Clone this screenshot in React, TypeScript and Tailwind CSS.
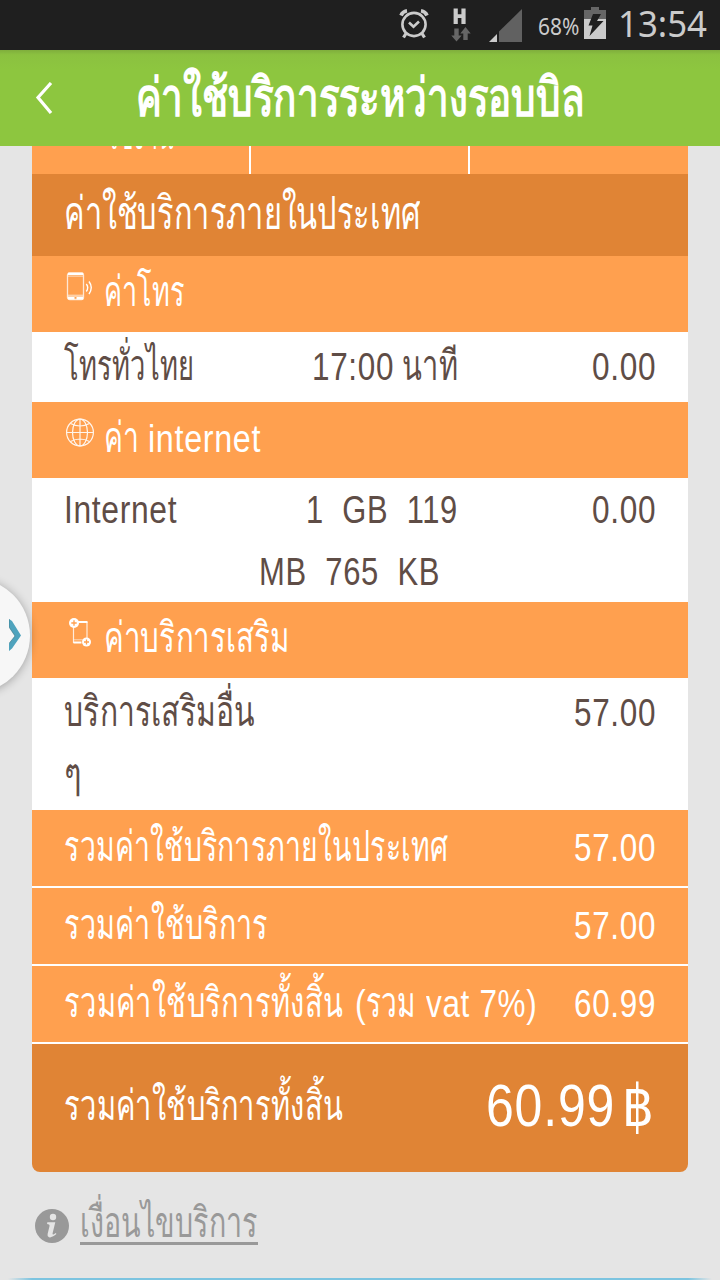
import { FC, ReactNode, useLayoutEffect, useRef, useState } from "react";

interface ITextProps {
  width: number;
  className?: string;
  children: ReactNode;
}

// condenses its text horizontally so that it takes the given width
const Text: FC<ITextProps> = ({ width, className = "", children }) => {
  const ref = useRef<HTMLSpanElement>(null);
  const [scale, setScale] = useState(1);

  useLayoutEffect(() => {
    if (ref.current) {
      setScale(width / ref.current.offsetWidth);
    }
  }, [width]);

  return (
    <span className={`block shrink-0 ${className}`} style={{ width }}>
      <span
        ref={ref}
        className="block w-max whitespace-pre origin-left"
        style={{ transform: `scaleX(${scale})` }}
      >
        {children}
      </span>
    </span>
  );
};

const Latin: FC<{ children: ReactNode }> = ({ children }) => (
  <span className="text-[38px] leading-none tracking-[0.8px]">{children}</span>
);

const AlarmIcon = () => (
  <svg className="mt-[9px]" width="30" height="30" viewBox="0 0 30 30" fill="none" stroke="#cbcbcb">
    <circle cx="15" cy="15.500" r="11.600" strokeWidth="2.600" />
    <path d="M10 13.500l4.500 4.200 5.500-5.200" strokeWidth="2.600" />
    <path d="M2 6.500Q3.500 2.500 8 1.800M28 6.500Q26.500 2.500 22 1.800" strokeWidth="3.600" />
    <path d="M7 24.500l-2.500 4M23 24.500l2.500 4" strokeWidth="3.200" />
  </svg>
);

const DataIcon = () => (
  <svg className="mt-2 ml-[22px]" width="20" height="34" viewBox="0 0 20 34">
    <path d="M2.600 .5h4.200v5.800h3.600V.5h4.200v15.500h-4.200V9.900H6.800V16H2.600z" fill="#cbcbcb" />
    <path
      d="M3.300 20.500h4.400v7h3l-5.200 6-5.200-6h3zM12.300 32v-6.500h-3L14.500 19l5.200 6.500h-3V32z"
      fill="#666"
    />
  </svg>
);

const SignalIcon = () => (
  <svg className="mt-[9px] ml-[18px]" width="33" height="33" viewBox="0 0 33 33">
    <path d="M10 33V22.500L33 0v33z" fill="#616161" />
    <path d="M0 33l8-8v8z" fill="#cbcbcb" />
  </svg>
);

const BatteryIcon = () => (
  <svg className="mt-[7px] ml-[5px]" width="22" height="32" viewBox="0 0 22 32">
    <path d="M7 0h8v3h7v9H0V3h7z" fill="#666" />
    <path d="M0 12h22v20H0z" fill="#cbcbcb" />
    <path d="M9 7h8l-4 7h6.500L5.500 29l3-10.500H4.500z" fill="#1f1f1f" />
  </svg>
);

const PhoneIcon = () => (
  <svg width="28" height="29" viewBox="0 0 28 29" fill="none" stroke="#fff">
    <rect x="1.500" y="1" width="16" height="26.500" rx="2" strokeWidth="1.300" opacity=".75" />
    <path d="M2 2h15M2 26.300h6.500M10.500 26.300h6.500" strokeWidth="2.400" />
    <path d="M2 23.800h15" strokeWidth="2.400" opacity=".5" />
    <path d="M2 4.500h15" strokeWidth="1" opacity=".4" />
    <path d="M20.300 12q2.800 3.500 0 7.500M23 9.500q4.500 6 0 12.500" strokeWidth="1.400" />
  </svg>
);

const GlobeIcon = () => (
  <svg width="29" height="29" viewBox="0 0 29 29" fill="none" stroke="#fff" strokeWidth="1.200" opacity=".9">
    <circle cx="14" cy="14.500" r="13.400" />
    <ellipse cx="14" cy="14.500" rx="7.500" ry="13.400" />
    <path d="M14 1v27M.5 14.500h27M4.500 5.500q9.500 5 19 0M4.500 23.500q9.500-5 19 0" />
  </svg>
);

const ExtraIcon = () => (
  <svg className="ml-[3px]" width="23" height="29" viewBox="0 0 23 29" fill="none" stroke="#fff">
    <path d="M4.500 8v17M18 4v17" strokeWidth="1.200" opacity=".8" />
    <path d="M9 4h9.500M4.500 24.500h8" strokeWidth="2.200" />
    <path d="M4.500 21.800h10" strokeWidth="1" opacity=".6" />
    <circle cx="5" cy="5" r="5" fill="#fff" stroke="none" />
    <circle cx="17.500" cy="24" r="4.500" fill="#fff" stroke="none" />
    <path d="M5 2.300v5.400M2.300 5h5.400M17.500 21.500v5M15 24h5" stroke="#ffa04f" strokeWidth="1.300" />
  </svg>
);

const InfoIcon = () => (
  <svg width="34" height="34" viewBox="0 0 34 34">
    <circle cx="17" cy="17" r="17" fill="#999" />
    <circle cx="18" cy="8" r="3.200" fill="#e5e5e5" />
    <path
      d="M12.300 13.300h8l-2.700 11q-.3 1.800 1.300.9l1.900-1.300.6 1.200Q17.500 29 14 28.300q-2-.6-1.400-3.200l2-8.300q.2-1.600-2.500-1.800z"
      fill="#e5e5e5"
    />
  </svg>
);

interface ISubHeadProps {
  icon: ReactNode;
  children: ReactNode;
}

const SubHead: FC<ISubHeadProps> = ({ icon, children }) => (
  <div className="flex h-[76px] pl-[34px] bg-[#ffa04f] leading-[72px]">
    <div className="w-[38px] pt-4">{icon}</div>
    {children}
  </div>
);

const totals = [
  {
    label: <Text width={384}>รวมค่าใช้บริการภายในประเทศ</Text>,
    amount: "57.00",
  },
  { label: <Text width={204}>รวมค่าใช้บริการ</Text>, amount: "57.00" },
  {
    label: (
      <>
        <Text width={279}>รวมค่าใช้บริการทั้งสิ้น</Text>
        <Text width={11} className="ml-3">
          <Latin>(</Latin>
        </Text>
        <Text width={50}>รวม</Text>
        <Text width={111} className="ml-2.5">
          <Latin>vat 7%)</Latin>
        </Text>
      </>
    ),
    amount: "60.99",
  },
];

const App = () => {
  return (
    <main className="relative flex flex-col w-[720px] h-[1280px] overflow-hidden bg-[#e5e5e5] font-['Liberation_Sans',sans-serif] text-[42px]">
      <header className="flex h-[50px] shrink-0 bg-[#1f1f1f] text-[#cbcbcb] pl-[399px] font-['Noto_Sans',sans-serif]">
        <AlarmIcon />
        <DataIcon />
        <SignalIcon />
        <Text width={41} className="ml-4 text-[23px] leading-[52px]">
          68%
        </Text>
        <BatteryIcon />
        <Text width={89} className="ml-3 text-[36px] leading-[48px]">
          13:54
        </Text>
      </header>
      <nav className="flex h-24 shrink-0 bg-[#8dc63f] bg-linear-to-b from-[#7fae3c] via-[#8bc140] via-5% to-[#8dc63f] to-20% text-white">
        <svg className="mt-8 ml-[35px]" width="18" height="32" viewBox="0 0 18 32" fill="none" stroke="#fff" strokeWidth="3.200">
          <path d="M16 1L3 15.500 16 31" />
        </svg>
        <Text width={448} className="ml-[83px] text-[53px] leading-[95px] font-bold">
          ค่าใช้บริการระหว่างรอบบิล
        </Text>
      </nav>
      <section className="mx-8 shrink-0 text-white">
        <div className="flex h-7 overflow-hidden bg-[#ffa04f]">
          <div className="w-[219px] border-r-2 border-white pl-[74px]">
            <Text width={68} className="-mt-[41px] leading-[60px]">
              ใช้งาน
            </Text>
          </div>
          <div className="w-[219px] border-r-2 border-white" />
        </div>
        <div className="h-[82px] bg-[#e08435] pl-8 text-[46px] leading-[78px]">
          <Text width={356}>ค่าใช้บริการภายในประเทศ</Text>
        </div>

        <SubHead icon={<PhoneIcon />}>
          <Text width={81}>ค่าโทร</Text>
        </SubHead>
        <div className="flex h-[70px] px-8 bg-white text-[#5f4d46] leading-[67px]">
          <div className="flex-1">
            <Text width={130}>โทรทั่วไทย</Text>
          </div>
          <Text width={82}>
            <Latin>17:00</Latin>
          </Text>
          <Text width={56} className="ml-2">
            นาที
          </Text>
          <Text width={64} className="ml-[134px]">
            <Latin>0.00</Latin>
          </Text>
        </div>

        <SubHead icon={<GlobeIcon />}>
          <Text width={35}>ค่า</Text>
          <Text width={113} className="ml-[9px]">
            <Latin>internet</Latin>
          </Text>
        </SubHead>
        <div className="flex h-[124px] px-8 bg-white text-[#5f4d46] leading-[62px]">
          <div className="flex-1">
            <Text width={113}>
              <Latin>Internet</Latin>
            </Text>
          </div>
          <div className="flex flex-col items-end">
            <Text width={152}>
              <Latin>{"1  GB  119"}</Latin>
            </Text>
            <Text width={181} className="mr-[18px]">
              <Latin>{"MB  765  KB"}</Latin>
            </Text>
          </div>
          <Text width={64} className="ml-[134px]">
            <Latin>0.00</Latin>
          </Text>
        </div>

        <SubHead icon={<ExtraIcon />}>
          <Text width={186}>ค่าบริการเสริม</Text>
        </SubHead>
        <div className="flex justify-between h-[132px] px-8 pt-[3px] bg-white text-[#5f4d46] leading-[62px]">
          <div>
            <Text width={191}>บริการเสริมอื่น</Text>
            <Text width={18}>ๆ</Text>
          </div>
          <Text width={82}>
            <Latin>57.00</Latin>
          </Text>
        </div>

        {totals.map((item, index) => (
          <div
            key={index}
            className="flex justify-between h-[78px] border-b-2 border-white px-8 bg-[#ffa04f] leading-[73px]"
          >
            <div className="flex">{item.label}</div>
            <Text width={82}>
              <Latin>{item.amount}</Latin>
            </Text>
          </div>
        ))}

        <div className="flex h-32 pl-8 bg-[#e08435] rounded-b-lg leading-[124px]">
          <Text width={279}>รวมค่าใช้บริการทั้งสิ้น</Text>
          <Text width={129} className="ml-[143px] text-[60px] tracking-[1px]">
            60.99
          </Text>
          <Text width={32} className="ml-[7px] text-[58px]">
            ฿
          </Text>
        </div>
      </section>

      <footer className="flex pl-[35px] text-[#999] leading-[102px]">
        <div className="pt-[37px]">
          <InfoIcon />
        </div>
        <div className="ml-[11px] h-[73px] border-b-3 border-[#999]">
          <Text width={178}>เงื่อนไขบริการ</Text>
        </div>
      </footer>

      {/* side drawer handle */}
      <div className="absolute top-[578px] -left-[85px] w-[115px] h-[115px] rounded-full bg-[#f7f7f7] shadow-[0_1px_10px_rgba(0,0,0,0.3)]" />
      <svg className="absolute top-[619px] left-[9px]" width="13" height="33" viewBox="0 0 13 33">
        <path d="M0 0l3 2 9 14.500L3 29.500 0 32v-7.500L6 17 0 8z" fill="#4fa3bd" />
        <path d="M0 0v8l6 9-6 7.500" fill="none" stroke="#35707f" strokeWidth=".6" />
      </svg>
      <div className="absolute bottom-0 inset-x-2 flex h-0.5">
        <div className="w-6 bg-linear-to-r from-transparent to-[#7cc4e0]" />
        <div className="flex-1 bg-[#7cc4e0]" />
        <div className="w-6 bg-linear-to-l from-transparent to-[#7cc4e0]" />
      </div>
    </main>
  );
};

export default App;
